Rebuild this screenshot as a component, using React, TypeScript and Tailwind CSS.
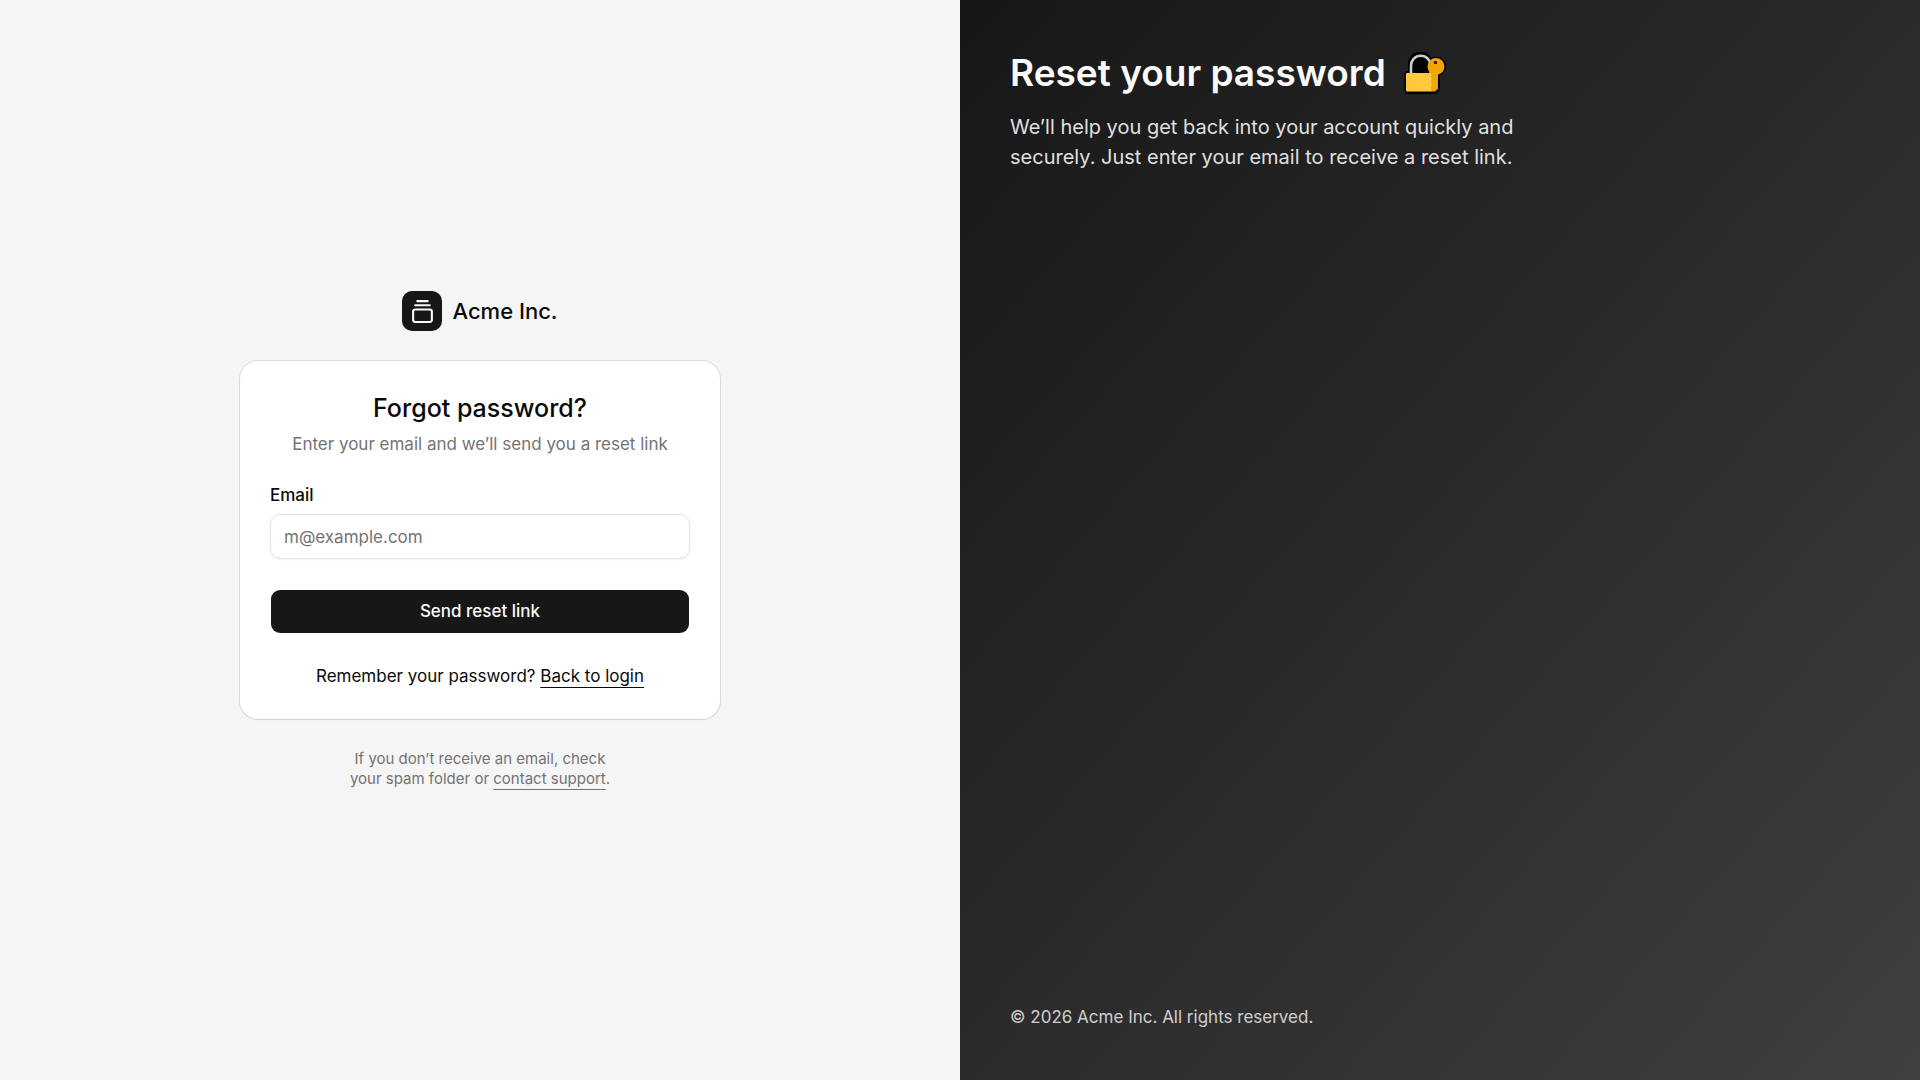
import { GalleryVerticalEnd } from "lucide-react";

function LockWithKey() {
  return (
    <svg viewBox="0 0 42 42" className="size-[42px] shrink-0" aria-hidden="true">
      <g fill="#000" stroke="#000" strokeWidth="4" strokeLinejoin="round">
        <path d="M6 22V12.500a10.500 10.500 0 0 1 21-1V22z" />
        <path d="M2.500 21H34v16l-3 3H2.500z" />
        <circle cx="32" cy="14.500" r="8" />
      </g>
      <path d="M7 22V13.500a9.800 9.800 0 0 1 19.600 0V22" fill="none" stroke="#ccc" strokeWidth="2.600" />
      <path d="M27 21h7v16l-3 2.500h-4z" fill="#e99a00" />
      <path d="M2 22a1 1 0 0 1 1-1h24.500v4l1 1.500-1 1.500v3l1 1.500-1 1.500v5.500H3a1 1 0 0 1-1-1z" fill="#ffc83d" />
      <path d="M27.500 21H33v14l-2 3h-3.500v-3l1-1.500-1-1.500v-3l1-1.500-1-1.500z" fill="#f2a50c" />
      <circle cx="32" cy="14.500" r="8.500" fill="#f2a400" />
      <circle cx="31.500" cy="10.500" r="1.600" fill="#000" />
    </svg>
  );
}

function ForgotPasswordForm() {
  return (
    <div className="rounded-[18px] bg-white p-[30px] shadow-xs ring-1 ring-black/10">
      <div className="text-center">
        <h1 className="text-[25px] leading-[35px] font-medium">Forgot password?</h1>
        <p className="mt-[6px] text-[17px] leading-[25px] text-[#737373]">
          Enter your email and we’ll send you a reset link
        </p>
      </div>
      <form className="mt-[26px]" onSubmit={(e) => e.preventDefault()}>
        <label htmlFor="email" className="block text-[17px] leading-[25px] font-medium">
          Email
        </label>
        <input
          id="email"
          type="email"
          placeholder="m@example.com"
          required
          className="mt-[6px] block h-[45px] w-full rounded-[10px] border border-[#e5e5e5] bg-white px-[13px] text-[17px] shadow-xs outline-none placeholder:text-[#737373] focus-visible:ring-2 focus-visible:ring-neutral-300"
        />
        <button
          type="submit"
          className="mt-[30px] flex h-[45px] w-full items-center justify-center rounded-[10px] border border-transparent bg-[#171717] bg-clip-padding text-[17px] font-medium text-[#fafafa] hover:bg-neutral-800"
        >
          Send reset link
        </button>
      </form>
      <p className="mt-[30px] text-center text-[17px] leading-[25px]">
        Remember your password?{" "}
        <a href="#login" className="underline decoration-1 underline-offset-[5px]">
          Back to login
        </a>
      </p>
    </div>
  );
}

export default function App() {
  return (
    <div className="grid min-h-screen font-[Inter,sans-serif] text-[#0a0a0a] lg:grid-cols-2">
      <main className="flex flex-col items-center justify-center bg-[#f5f5f5] p-10">
        <div className="flex w-full max-w-[480px] flex-col gap-[30px]">
          <a href="#home" className="flex items-center gap-[10px] self-center text-[22px] leading-[35px] font-medium">
            <span className="flex size-10 items-center justify-center rounded-[10px] bg-[#171717] text-[#fafafa]">
              <GalleryVerticalEnd size={25} />
            </span>
            Acme Inc.
          </a>
          <ForgotPasswordForm />
          <p className="text-center text-[15px] leading-[20px] text-[#737373]">
            If you don’t receive an email, check
            <br />
            your spam folder or{" "}
            <a href="#support" className="underline decoration-1 underline-offset-[5px]">
              contact support
            </a>
            .
          </p>
        </div>
      </main>
      <aside className="hidden flex-col justify-between bg-linear-to-br from-[#171717] to-[#404040] p-[50px] text-[#fafafa] lg:flex">
        <div>
          <h2 className="flex items-center gap-[18px] text-[37px] leading-[45px] font-semibold">
            Reset your password
            <LockWithKey />
          </h2>
          <p className="mt-[17px] max-w-[560px] text-[20px] leading-[30px] text-[#fafafa]/90">
            We’ll help you get back into your account quickly and securely. Just enter your email to receive a reset link.
          </p>
        </div>
        <p className="text-[17px] leading-[25px] text-[#fafafa]/80">© 2026 Acme Inc. All rights reserved.</p>
      </aside>
    </div>
  );
}
